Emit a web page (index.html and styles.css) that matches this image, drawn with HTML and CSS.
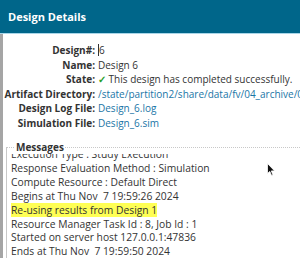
FILE: index.html
```html
<!DOCTYPE html>
<html lang="en">
<head>
    <meta charset="UTF-8">
    <title>Design Details</title>
    <link rel="stylesheet" href="styles.css">
</head>
<body>
    <div class="header">Design Details</div>
    <div class="page">
        <div class="details">
            <div class="row">
                <span class="label">Design#:</span>
                <span class="value"><span class="caret"></span>6</span>
            </div>
            <div class="row">
                <span class="label">Name:</span>
                <span class="value">Design 6</span>
            </div>
            <div class="row">
                <span class="label">State:</span>
                <span class="value"><span class="check">&#10003;</span> This design has completed successfully.</span>
            </div>
            <div class="row">
                <span class="label">Artifact Directory:</span>
                <a class="value link" href="#">/state/partition2/share/data/fv/04_archive/01</a>
            </div>
            <div class="row">
                <span class="label">Design Log File:</span>
                <a class="value link" href="#">Design_6.log</a>
            </div>
            <div class="row">
                <span class="label">Simulation File:</span>
                <a class="value link" href="#">Design_6.sim</a>
            </div>
        </div>

        <fieldset class="messages">
            <legend>Messages</legend>
            <div class="log">
                <div class="log-lines">
                    <div>Execution Type : Study Execution</div>
                    <div>Response Evaluation Method : Simulation</div>
                    <div>Compute Resource : Default Direct</div>
                    <div>Begins at Thu Nov&nbsp;&nbsp;7 19:59:26 2024</div>
                    <div><span class="hl">Re-using results from Design 1</span></div>
                    <div>Resource Manager Task Id : 8, Job Id : 1</div>
                    <div>Started on server host 127.0.0.1:47836</div>
                    <div>Ends at Thu Nov&nbsp;&nbsp;7 19:59:50 2024</div>
                </div>
            </div>
        </fieldset>

        <svg class="cursor" width="9" height="14" viewBox="0 0 9 14">
            <path d="M0.5 0.5 L0.5 10.5 L2.8 8.4 L4.6 12.6 L6 12 L4.3 7.9 L7.6 7.9 Z" fill="#111" stroke="#fff" stroke-width="0.8"/>
        </svg>
    </div>
</body>
</html>
```

FILE: styles.css
```css
body, html {
    margin: 0;
    padding: 0;
    height: 100%;
    overflow: hidden;
    font-family: "Open Sans", sans-serif;
    background: #fff;
}

.header {
    background-color: #00668a;
    color: white;
    font-weight: bold;
    font-size: 11px;
    height: 33px;
    line-height: 33px;
    padding-left: 8px;
    border-bottom: 1px solid #a9d6e8;
}

.page {
    position: relative;
    border-left: 3px solid #a5a5a5;
    height: 224px;
    overflow: hidden;
}

.details {
    padding-top: 9px;
}

.row {
    display: flex;
    height: 14.5px;
    font-size: 10px;
    line-height: 14px;
    white-space: nowrap;
}

.label {
    width: 92px;
    flex: none;
    text-align: right;
    font-weight: bold;
    color: #333;
    padding-right: 3px;
}

.value {
    color: #333;
}

.link {
    color: #1a75a6;
    text-decoration: none;
}

.caret {
    display: inline-block;
    width: 1px;
    height: 12px;
    background: #333;
    vertical-align: -2px;
}

.check {
    color: #2aa02a;
    font-weight: bold;
}

.messages {
    margin: 10px 0 0 3px;
    padding: 0 0 0 4px;
    border: none;
    border-left: 1px solid #c8c8c8;
    border-top: 1px dotted #c8c8c8;
}

.messages legend {
    font-size: 10px;
    line-height: 14px;
    font-weight: bold;
    color: #333;
    padding: 0 1px;
    margin-left: 4px;
}

.log {
    height: 120px;
    overflow: hidden;
    font-size: 10.3px;
    line-height: 13.9px;
    color: #333;
    white-space: nowrap;
}

.log-lines {
    margin-top: -6px;
}

.hl {
    background: #ffff55;
}

.cursor {
    position: absolute;
    left: 264px;
    top: 129px;
}
```
